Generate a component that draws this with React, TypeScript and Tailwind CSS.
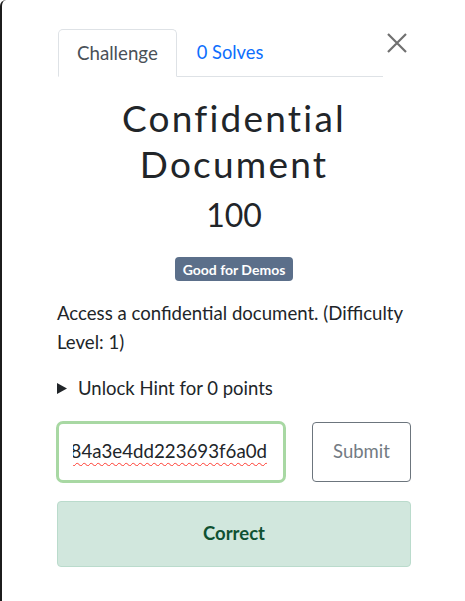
import React from 'react';

const ChallengeModal: React.FC = () => {
  return (
    <div className="min-h-screen bg-white border-l-2 border-[#1c1c1c] rounded-tl-[6px] font-['Lato',_'Liberation_Sans',_sans-serif] text-[#212529]">
      <div className="pl-[55px] pr-[54px] pt-[29px]">
        {/* Tabs + close */}
        <div className="flex items-start">
          <ul className="ml-[1px] flex flex-1 border-b border-[#dee2e6]">
            <li className="-mb-px px-[18px] h-[48px] flex items-center border border-[#dee2e6] border-b-white rounded-t-[5px] bg-white text-[18.7px] text-[#495057]">
              Challenge
            </li>
            <li className="px-[20px] h-[47px] flex items-center text-[18.3px] text-[#0d6efd]">
              0 Solves
            </li>
          </ul>
          <button className="w-[28px] h-[20px] mt-[4px] flex items-center justify-center text-[#707070]" title="Close">
            <svg width="20" height="20" viewBox="0 0 20 20" fill="none" stroke="currentColor" strokeWidth="2.2">
              <path d="M1 1L19 19M19 1L1 19" />
            </svg>
          </button>
        </div>

        {/* Title */}
        <div className="text-center">
          <h2 className="mt-[18px] text-[37px] leading-[46px] tracking-[2.2px] text-[#212529]">
            Confidential Document
          </h2>
          <h3 className="mt-[10px] text-[32px] leading-[36px]">100</h3>
          <div className="mt-[24px] flex justify-center">
            <span className="inline-flex items-center h-[24px] px-[8px] rounded-[4px] bg-[#5b6f8a] text-white text-[14px] font-bold">
              Good for Demos
            </span>
          </div>
        </div>

        {/* Description */}
        <p className="mt-[18px] text-[18.6px] leading-[28.5px]">
          Access a confidential document. (Difficulty Level: 1)
        </p>

        {/* Hint */}
        <div className="mt-[18px] flex items-center gap-[11px] text-[18.5px] leading-[28.5px]">
          <svg width="10" height="11" viewBox="0 0 10 11" className="shrink-0">
            <path d="M0 0L10 5.5L0 11Z" fill="#212529" />
          </svg>
          <span>Unlock Hint for 0 points</span>
        </div>

        {/* Answer */}
        <div className="mt-[18px] -ml-[1px] flex items-center">
          <div className="w-[230px] h-[62px] border-[3px] border-[#a8d8a3] rounded-[7px] pl-[14px] pr-[16px] flex items-center">
            <div className="flex-1 flex justify-end overflow-hidden whitespace-nowrap">
              <span className="text-[18.7px] underline decoration-wavy decoration-[#ff3b30] decoration-[1.2px] underline-offset-[4px]">
                53d08bfac58b384a3e4dd223693f6a0d
              </span>
            </div>
          </div>
          <div className="flex-1" />
          <button className="w-[99px] h-[60px] border border-[#6c757d] rounded-[4px] text-[18.5px] text-[#737b83]">
            Submit
          </button>
        </div>

        <div className="mt-[18px] h-[66px] flex items-center justify-center bg-[#d1e7dd] border border-[#badbcc] rounded-[4px] text-[18.5px] font-bold text-[#0f5132]">
          Correct
        </div>
      </div>
    </div>
  );
};

export default function App() {
  return <ChallengeModal />;
}
